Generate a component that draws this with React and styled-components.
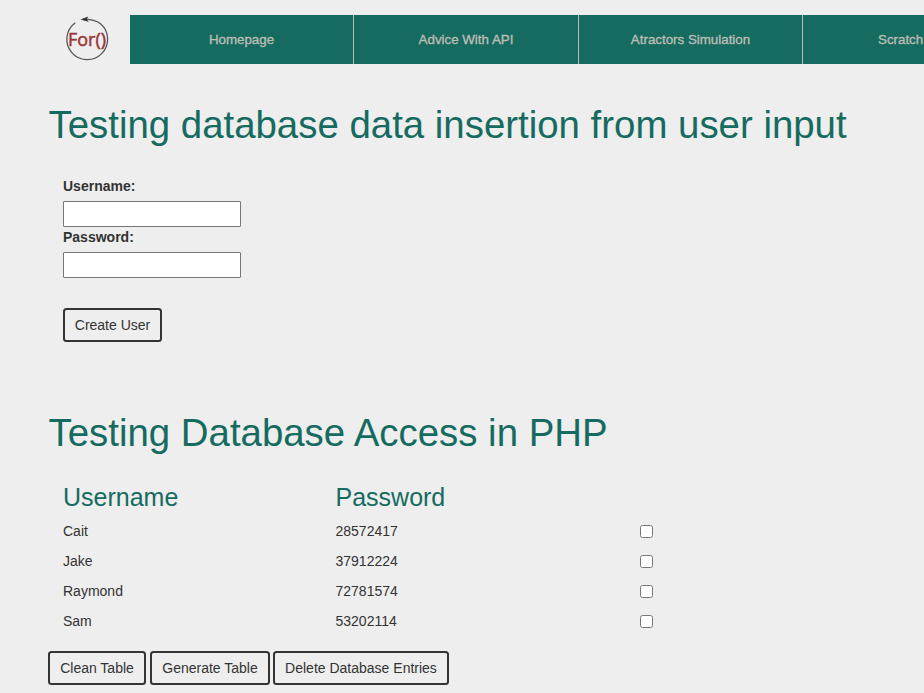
import React from 'react';
import styled, { createGlobalStyle } from 'styled-components';

const Global = createGlobalStyle`
  *, *::before, *::after { box-sizing: border-box; }
  body {
    margin: 0;
    background: #eee;
    color: #333;
    font: 14px/20px "Liberation Sans", Arial, sans-serif;
    overflow: hidden;
  }
`;
const Page = styled.div`
  width: 924px;
  height: 693px;
  overflow: hidden;
  padding-top: 15px;
`;
const Header = styled.header`
  display: flex;
  height: 49px;
`;
const Logo = styled.svg`
  flex: none;
  width: 46px;
  height: 46px;
  margin: 0 20px 0 64px;
`;
const Nav = styled.nav`
  flex: 1;
  display: grid;
  grid-template-columns: 224px 225px 224px 1fr;
`;
const NavItem = styled.a`
  display: flex;
  align-items: center;
  justify-content: center;
  background: #156b60;
  color: #bdbdb5;
  border-right: 1px solid #bbb;
  font-size: 13.333px;
  -webkit-text-stroke: 0.35px #bdbdb5;
  white-space: nowrap;
  &:last-child {
    justify-content: flex-start;
    padding-left: 75px;
    border-right: 0;
  }
`;
const Title = styled.h1`
  margin: ${(p) => p.$top}px 0 0 48.5px;
  height: 48px;
  color: #156b60;
  font-size: 38.4px;
  font-weight: 400;
  line-height: 48px;
  white-space: nowrap;
`;
const Form = styled.form`
  display: flex;
  flex-direction: column;
  align-items: flex-start;
  margin: 27px 0 0 63px;
`;
const Label = styled.label`
  height: 25px;
  font-weight: 700;
`;
const Field = styled.input`
  width: 178px;
  height: 26px;
  border: 1px solid #767676;
  border-radius: 1px;
  background: #fff;
  padding: 1px 2px;
  margin: 0;
`;
const Button = styled.button`
  width: ${(p) => p.$width}px;
  height: 34px;
  padding: 0;
  border: 2px solid #343434;
  border-radius: 3.5px;
  background: #eee;
  color: #333;
  font: inherit;
  white-space: nowrap;
`;
const Submit = styled(Button)`
  margin-top: 30px;
`;
const Table = styled.div`
  display: grid;
  grid-template-columns: 272.5px 303.5px 14px;
  grid-template-rows: 38px repeat(4, 30px);
  align-items: center;
  margin: 21px 0 0 63px;
`;
const Heading = styled.h2`
  margin: 0;
  color: #156b60;
  font-size: 25px;
  font-weight: 400;
  line-height: 30px;
`;
const Cell = styled.span``;
const Check = styled.input`
  width: 13px;
  height: 13px;
  margin: 0 0 0 1px;
`;
const Actions = styled.div`
  display: flex;
  margin: 15px 0 0 48px;
  gap: 4px;
  & > :last-child { margin-left: -1px; }
`;

const links = ['Homepage', 'Advice With API', 'Atractors Simulation', 'Scratch'];
const users = [['Cait', '28572417'], ['Jake', '37912224'], ['Raymond', '72781574'], ['Sam', '53202114']];

export default function App() {
  return (
    <Page>
      <Global />
      <Header>
        <Logo viewBox="0 0 46 46">
          <path d="M11.3 7.7A20.4 20.4 0 1 0 36.8 9C32.5 5.5 27.5 4.2 19 4.2" fill="none" stroke="#555" strokeWidth="1.3" />
          <path d="M16.5 4.6L24.3 1.6L22.7 4.5L25 7Z" fill="#333" />
          <text x="4" y="31" fontSize="19" fill="#9b3434" stroke="#9b3434" strokeWidth="0.5" fontFamily="Open Sans, sans-serif" textLength="38" lengthAdjust="spacingAndGlyphs">For()</text>
        </Logo>
        <Nav>{links.map((l) => <NavItem key={l}>{l}</NavItem>)}</Nav>
      </Header>
      <Title $top={37}>Testing database data insertion from user input</Title>
      <Form>
        <Label htmlFor="user">Username:</Label>
        <Field id="user" />
        <Label htmlFor="pass">Password:</Label>
        <Field id="pass" />
        <Submit type="button" $width={99}>Create User</Submit>
      </Form>
      <Title $top={67}>Testing Database Access in PHP</Title>
      <Table>
        <Heading>Username</Heading><Heading>Password</Heading><Cell />
        {users.map(([name, pass]) => (
          <React.Fragment key={name}>
            <Cell>{name}</Cell><Cell>{pass}</Cell><Check type="checkbox" />
          </React.Fragment>
        ))}
      </Table>
      <Actions>
        <Button $width={98}>Clean Table</Button>
        <Button $width={120}>Generate Table</Button>
        <Button $width={176}>Delete Database Entries</Button>
      </Actions>
    </Page>
  );
}
